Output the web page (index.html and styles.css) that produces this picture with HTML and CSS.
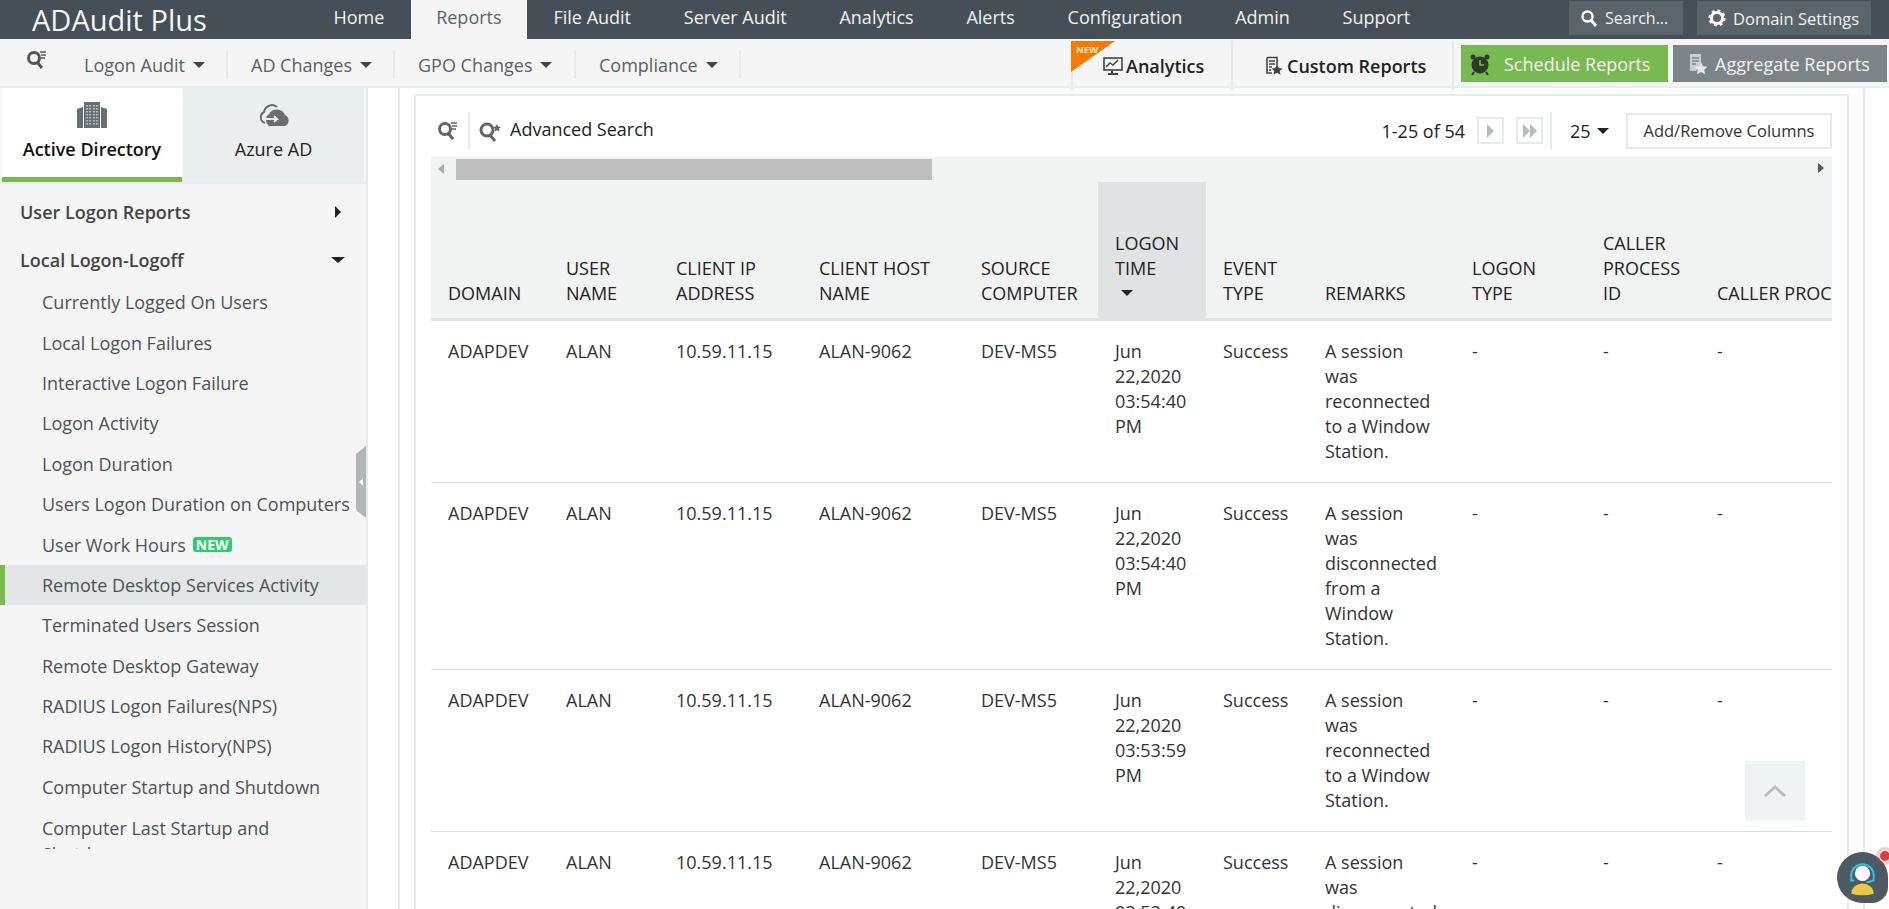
FILE: index.html
```html
<!DOCTYPE html>
<html lang="en">
<head>
<meta charset="utf-8">
<title>ADAudit Plus</title>
<link rel="stylesheet" href="styles.css">
</head>
<body>
<header class="topbar">
  <div class="logo">ADAudit Plus</div>
  <nav class="topnav">
    <a>Home</a><a class="active">Reports</a><a>File Audit</a><a>Server Audit</a><a>Analytics</a><a>Alerts</a><a>Configuration</a><a>Admin</a><a>Support</a>
  </nav>
  <div class="top-actions">
    <div class="top-btn top-search">
      <svg class="ic18" viewBox="0 0 18 18"><circle cx="7.5" cy="7.5" r="5" fill="none" stroke="#fff" stroke-width="2.4"/><path d="M11 11l5 6" stroke="#fff" stroke-width="3"/></svg>
      <span>Search...</span>
    </div>
    <div class="top-btn top-domain">
      <svg class="ic18" viewBox="0 0 18 18"><circle cx="9" cy="9" r="5.6" fill="none" stroke="#fff" stroke-width="3"/><circle cx="9" cy="9" r="7.6" fill="none" stroke="#fff" stroke-width="2" stroke-dasharray="3 3"/></svg>
      <span>Domain Settings</span>
    </div>
  </div>
</header>

<div class="subbar">
  <div class="subicon">
    <svg class="ic22" viewBox="0 0 22 22"><circle cx="8" cy="9" r="5.5" fill="none" stroke="#555" stroke-width="3"/><path d="M11 13l5 6" stroke="#555" stroke-width="3"/><path d="M14 3h6M15 6h5M15 9h4" stroke="#555" stroke-width="1.4"/></svg>
  </div>
  <div class="submenu"><a>Logon Audit<i class="caret"></i></a><a>AD Changes<i class="caret"></i></a><a>GPO Changes<i class="caret"></i></a><a>Compliance<i class="caret"></i></a></div>
  <div class="subright">
    <div class="subtab tab-analytics">
      <span class="ribbon"></span><span class="ribbon-text">NEW</span>
      <svg class="ic20" viewBox="0 0 20 20"><rect x="1" y="2" width="18" height="12" fill="none" stroke="#444" stroke-width="1.6"/><path d="M3 11l4-4 3 2 5-5" fill="none" stroke="#444" stroke-width="1.4"/><path d="M9 14v3M5 18h10" stroke="#444" stroke-width="2"/></svg>
      <span>Analytics</span>
    </div>
    <div class="subtab tab-custom">
      <svg class="ic20" viewBox="0 0 20 20"><path d="M3 1.500h10v8M8 17H3V1.500" fill="none" stroke="#444" stroke-width="1.600"/><path d="M5 5h6M5 8h6M5 11h3M5 14h2" stroke="#444" stroke-width="1.400"/><path d="M13 8.500l1.700 3.500 3.800.4-2.800 2.600.8 3.700-3.500-2-3.500 2 .8-3.700-2.800-2.600 3.800-.4z" fill="#444"/></svg>
      <span>Custom Reports</span>
    </div>
    <div class="cta cta-green">
      <svg class="ic24" viewBox="0 0 24 24"><circle cx="12" cy="13" r="8.500" fill="#2c3a2a"/><circle cx="5" cy="5" r="2.500" fill="#2c3a2a"/><circle cx="19" cy="5" r="2.500" fill="#2c3a2a"/><path d="M12 8v5h4" stroke="#79b951" stroke-width="1.600" fill="none"/><path d="M6 20l-2 3M18 20l2 3" stroke="#2c3a2a" stroke-width="2"/></svg>
      <span>Schedule Reports</span>
    </div>
    <div class="cta cta-grey">
      <svg class="ic24" viewBox="0 0 24 24"><path d="M4 2h11v9l-5 8H4z" fill="#c9cdcf"/><path d="M6 6h7M6 9h7M6 12h4" stroke="#7d8488" stroke-width="1.400"/><path d="M15 10l2 4.200 4.500.5-3.300 3.100.9 4.500-4.100-2.300-4.100 2.300.9-4.500-3.300-3.100 4.500-.5z" fill="#e4e6e7"/></svg>
      <span>Aggregate Reports</span>
    </div>
  </div>
</div>

<div class="content">
  <aside class="sidebar">
    <div class="sidetabs">
      <div class="sidetab current">
        <svg class="tabicon" viewBox="0 0 32 28"><path d="M1 27V8l6-2v21zM25 27V6l6 2v19z" fill="#686e72"/><rect x="8" y="1" width="16" height="26" fill="#686e72"/><path d="M11 4v21M14 4v21M18 4v21M21 4v21" stroke="#d4d6d7" stroke-width="1.500" stroke-dasharray="1.500 1.500"/></svg>
        <span>Active Directory</span>
      </div>
      <div class="sidetab">
        <svg class="tabicon" viewBox="0 0 36 28"><path d="M9 22a6 6 0 0 1-1-11 8 8 0 0 1 13-5" fill="none" stroke="#686e72" stroke-width="2"/><path d="M12 24a7 7 0 0 1 1-11 9 9 0 0 1 16 1 6 6 0 0 1 0 11H13z" fill="#686e72"/><path d="M6 18h15l-3-3M21 18l-3 3" fill="none" stroke="#ebeeef" stroke-width="1.800"/></svg>
        <span>Azure AD</span>
      </div>
    </div>
    <div class="sidelist">
      <div class="group closed">User Logon Reports</div>
      <div class="group open">Local Logon-Logoff</div>
      <a>Currently Logged On Users</a>
      <a>Local Logon Failures</a>
      <a>Interactive Logon Failure</a>
      <a>Logon Activity</a>
      <a>Logon Duration</a>
      <a>Users Logon Duration on Computers</a>
      <a>User Work Hours <b class="newtag">NEW</b></a>
      <a class="selected">Remote Desktop Services Activity</a>
      <a>Terminated Users Session</a>
      <a>Remote Desktop Gateway</a>
      <a>RADIUS Logon Failures(NPS)</a>
      <a>RADIUS Logon History(NPS)</a>
      <a>Computer Startup and Shutdown</a>
      <a class="wrap">Computer Last Startup and Shutdown</a>
    </div>
    <div class="collapse"><span></span></div>
  </aside>

  <main class="main">
    <section class="card">
      <div class="toolbar">
        <div class="tool-left">
          <span class="tool-ic"><svg class="ic22" viewBox="0 0 22 22"><circle cx="8" cy="10" r="5.500" fill="none" stroke="#666" stroke-width="3"/><path d="M11 14l5 6" stroke="#666" stroke-width="3"/><path d="M14 4h6M15 7h5M15 10h4" stroke="#666" stroke-width="1.400"/></svg></span>
          <svg class="ic24b" viewBox="0 0 24 22"><circle cx="9" cy="10" r="6" fill="none" stroke="#666" stroke-width="3"/><path d="M12 15l5 6" stroke="#666" stroke-width="3"/><path d="M19 4l1.200 2.600 2.800.3-2.100 1.900.6 2.800-2.500-1.400-2.500 1.400.6-2.800-2.100-1.900 2.800-.3z" fill="#666"/></svg>
          <span class="adv">Advanced Search</span>
        </div>
        <div class="tool-right">
          <span class="range">1-25 of 54</span>
          <span class="pg"><i class="tri"></i></span>
          <span class="pg"><i class="tri"></i><i class="tri"></i></span>
          <span class="perpage">25<i class="caret dark"></i></span>
          <span class="addcol">Add/Remove Columns</span>
        </div>
      </div>

      <div class="tablewrap">
        <div class="hscroll">
          <span class="arrow-left"></span>
          <span class="thumb"></span>
          <span class="arrow-right"></span>
        </div>
        <table class="grid">
          <colgroup>
            <col class="c1"><col class="c2"><col class="c3"><col class="c4"><col class="c5"><col class="c6"><col class="c7"><col class="c8"><col class="c9"><col class="c10"><col class="c11">
          </colgroup>
          <thead>
            <tr>
              <th>DOMAIN</th><th>USER<br>NAME</th><th>CLIENT IP<br>ADDRESS</th><th>CLIENT HOST<br>NAME</th><th>SOURCE<br>COMPUTER</th>
              <th class="sorted">LOGON<br>TIME<i class="caret dark block"></i></th>
              <th>EVENT<br>TYPE</th><th>REMARKS</th><th>LOGON<br>TYPE</th><th>CALLER<br>PROCESS<br>ID</th><th class="nowrap">CALLER PROCESS NAME</th>
            </tr>
          </thead>
          <tbody>
            <tr><td>ADAPDEV</td><td>ALAN</td><td>10.59.11.15</td><td>ALAN-9062</td><td>DEV-MS5</td><td>Jun 22,2020 03:54:40 PM</td><td>Success</td><td>A session was reconnected to a Window Station.</td><td>-</td><td>-</td><td>-</td></tr>
            <tr><td>ADAPDEV</td><td>ALAN</td><td>10.59.11.15</td><td>ALAN-9062</td><td>DEV-MS5</td><td>Jun 22,2020 03:54:40 PM</td><td>Success</td><td>A session was disconnected from a Window Station.</td><td>-</td><td>-</td><td>-</td></tr>
            <tr><td>ADAPDEV</td><td>ALAN</td><td>10.59.11.15</td><td>ALAN-9062</td><td>DEV-MS5</td><td>Jun 22,2020 03:53:59 PM</td><td>Success</td><td>A session was reconnected to a Window Station.</td><td>-</td><td>-</td><td>-</td></tr>
            <tr><td>ADAPDEV</td><td>ALAN</td><td>10.59.11.15</td><td>ALAN-9062</td><td>DEV-MS5</td><td>Jun 22,2020 03:53:40 PM</td><td>Success</td><td>A session was disconnected from a Window Station.</td><td>-</td><td>-</td><td>-</td></tr>
          </tbody>
        </table>
      </div>
    </section>
  </main>
</div>

<div class="totop"><svg viewBox="0 0 24 14" class="chev"><path d="M2 12l10-9 10 9" fill="none" stroke="#b9bcbd" stroke-width="3"/></svg></div>
<div class="chat">
  <svg viewBox="0 0 50 50" class="chat-ic"><circle cx="25" cy="21" r="7.500" fill="#fff"/><path d="M14 23a11 11 0 0 1 22 0" fill="none" stroke="#29c4dd" stroke-width="2"/><path d="M14 22v6h3M36 22v6l-7 2" fill="none" stroke="#29c4dd" stroke-width="2"/><path d="M14 41a11 10 0 0 1 22 0q-11 3-22 0z" fill="#e9c93f"/></svg>
  <span class="chat-dot"></span>
</div>
</body>
</html>
```

FILE: styles.css
```css
* { box-sizing: border-box; }
html, body { margin: 0; height: 100%; overflow: hidden; }
body {
  width: 1889px; height: 909px; display: flex; flex-direction: column; position: relative;
  font-family: "Open Sans", "Noto Sans", sans-serif; font-size: 18px; color: #333; background: #fff;
}
svg { display: block; flex: none; }
.ic18 { width: 18px; height: 20px; }
.ic20 { width: 20px; height: 20px; }
.ic22 { width: 22px; height: 22px; }
.ic24 { width: 24px; height: 24px; }
.ic24b { width: 24px; height: 22px; }

.topbar { height: 39px; flex: none; background: #444f57; display: flex; color: #fff; }
.logo { width: 307px; padding-left: 32px; font-size: 29px; line-height: 39px; color: #f4f5f5; white-space: nowrap; }
.topnav { display: flex; }
.topnav a { padding: 0 26.400px; line-height: 35px; font-size: 18px; color: #f2f3f3; white-space: nowrap; }
.topnav a.active { background: #f5f5f5; color: #5b646a; padding: 0 25.500px 0 25.500px; }
.top-actions { margin-left: auto; display: flex; gap: 14px; padding: 1px 18px 4px 0; }
.top-btn { background: #5a646b; display: flex; align-items: center; padding: 0 0 0 11px; gap: 7px; font-size: 16px; white-space: nowrap; color: #f2f3f3; }
.top-search { width: 114px; }
.top-domain { width: 174px; font-size: 16.500px; }

.subbar { height: 49px; flex: none; background: #f5f5f5; border-bottom: 2px solid #e9ecec; display: flex; position: relative; }
.subicon { width: 72px; padding: 10px 0 0 26px; }
.submenu { display: flex; padding-top: 12px; }
.submenu a { height: 28px; padding: 0 0 0 12px; border-right: 2px solid #e6eaea; display: flex; align-items: center; gap: 8px; font-size: 18px; color: #5a6065; white-space: nowrap; }
.submenu a + a { padding-left: 23px; }
.submenu a:nth-child(1) { width: 156px; }
.submenu a:nth-child(2) { width: 167px; }
.submenu a:nth-child(3) { width: 181px; }
.submenu a:nth-child(4) { width: 165px; }
.caret { display: inline-block; width: 0; height: 0; border: 6px solid transparent; border-top: 6px solid #444; border-bottom: 0; }
.caret.dark { border-top-color: #222; }
.caret.block { display: block; margin: 9px 0 10px 6px; }
.subright { margin-left: auto; display: flex; padding: 2px 2px 0 0; }
.subtab { height: 50px; margin-bottom: -3px; border-left: 2px solid #e6eaea; display: flex; align-items: center; gap: 3px; font-size: 18px; font-weight: 600; color: #222; position: relative; white-space: nowrap; }
.tab-analytics { width: 160px; padding-left: 30px; }
.tab-custom { padding-left: 31px; border-right: 2px solid #e6eaea; width: 223px; }
.ribbon { position: absolute; left: -2px; top: 0; width: 0; height: 0; border-top: 31px solid #f47a00; border-right: 44px solid transparent; }
.ribbon-text { position: absolute; left: 3px; top: 4px; font-size: 9.500px; line-height: 10px; font-weight: 700; color: #ffe3c4; }
.cta { height: 37px; margin: 4px 0 0; display: flex; align-items: center; font-size: 18px; white-space: nowrap; color: #f4f6f2; }
.cta-green { width: 207px; margin-left: 7px; background: #79b951; padding-left: 7px; gap: 12px; }
.cta-grey { width: 214px; margin-left: 5px; background: #7d8488; padding-left: 13px; gap: 5px; }

.content { flex: 1; min-height: 0; display: flex; }
.sidebar { width: 368px; flex: none; background: #f5f5f5; border-right: 2px solid #e6eaea; position: relative; overflow: hidden; }
.sidetabs { display: flex; height: 96px; border-bottom: 2px solid #e9ecec; padding-left: 2px; }
.sidetab { width: 181px; display: flex; flex-direction: column; align-items: center; padding-top: 13px; background: #ebeeef; font-size: 18px; color: #222; }
.sidetab.current { width: 180px; margin-right: 1px; background: #fff; border-bottom: 5px solid #79b951; font-weight: 600; color: #111; }
.tabicon { height: 28px; width: 36px; margin-bottom: 8px; }
.sidelist { height: 665px; overflow: hidden; padding-top: 4px; }
.group { height: 48px; padding: 0 20px; display: flex; align-items: center; justify-content: space-between; font-size: 18px; font-weight: 600; color: #444; }
.group.closed::after { content: ""; border-left: 6px solid #222; border-top: 6px solid transparent; border-bottom: 6px solid transparent; margin-right: 5px; }
.group.open { margin-bottom: -2px; }
.group.open::after { content: ""; border-top: 6px solid #222; border-left: 7px solid transparent; border-right: 7px solid transparent; margin-right: 1px; }
.sidelist a { display: flex; align-items: center; height: 40.400px; padding-left: 42px; font-size: 18px; color: #4d5257; white-space: nowrap; }
.sidelist a.selected { background: #e3e5e6; border-left: 5px solid #79b951; padding-left: 37px; }
.sidelist a.wrap { display: block; white-space: normal; width: 300px; line-height: 26px; height: 60px; padding-top: 8px; }
.newtag { margin-left: 7px; background: #2ecc71; color: #fff; font-size: 14px; font-weight: 700; line-height: 15px; padding: 0 3px; border-radius: 3px; }
.collapse { position: absolute; right: 0; top: 358px; width: 10px; height: 72px; background: #b1b5b6; clip-path: polygon(0 8px, 100% 0, 100% 100%, 0 calc(100% - 8px)); display: flex; align-items: center; justify-content: center; }
.collapse span { border-right: 4px solid #fff; border-top: 4px solid transparent; border-bottom: 4px solid transparent; }

.main { width: 1467px; flex: none; padding: 6px 14px 0 14px; margin-left: 30px; border-left: 2px solid #e6eaea; border-right: 2px solid #e6eaea; overflow: hidden; }
.card { height: 1000px; border: 2px solid #e6eaea; padding: 0 15px; }
.toolbar { height: 61px; display: flex; justify-content: space-between; padding-top: 16px; }
.tool-left { display: flex; align-items: center; height: 37px; }
.tool-ic { width: 39px; height: 37px; padding: 7px 0 0 6px; border-right: 2px solid #e6eaea; margin-right: 8px; }
.adv { margin-left: 8px; font-size: 18px; color: #222; line-height: 35px; height: 37px; }
.tool-right { display: flex; align-items: center; height: 37px; }
.range { font-size: 18px; color: #222; margin-right: 12px; }
.pg { width: 27px; height: 27px; border: 2px solid #e6eaea; display: flex; align-items: center; justify-content: center; margin-right: 12px; }
.pg + .pg { margin-right: 7px; }
.tri { border-left: 7px solid #b9bcbd; border-top: 7px solid transparent; border-bottom: 7px solid transparent; }
.perpage { height: 37px; border-left: 2px solid #e6eaea; padding-left: 18px; width: 76px; display: flex; align-items: center; gap: 6px; font-size: 18px; color: #222; }
.addcol { width: 206px; height: 36px; border: 2px solid #e6eaea; display: flex; align-items: center; justify-content: center; font-size: 16.500px; color: #333; white-space: nowrap; }

.tablewrap { width: 1401px; overflow: hidden; }
.hscroll { height: 23px; background: #f1f2f2; padding-top: 2px; display: flex; position: relative; }
.arrow-left { width: 25px; display: flex; }
.arrow-left::before { content: ""; margin: 5px 0 0 7px; height: 0; border-right: 6px solid #aaa; border-top: 5px solid transparent; border-bottom: 5px solid transparent; }
.thumb { width: 476px; background: #bdbdbd; }
.arrow-right { position: absolute; right: 8px; top: 6px; border-left: 6px solid #555; border-top: 5px solid transparent; border-bottom: 5px solid transparent; }

.grid { border-collapse: collapse; table-layout: fixed; width: 1480px; font-size: 18px; line-height: 25px; }
.c1 { width: 118px; } .c2 { width: 110px; } .c3 { width: 143px; } .c4 { width: 162px; } .c5 { width: 134px; }
.c6 { width: 108px; } .c7 { width: 102px; } .c8 { width: 147px; } .c9 { width: 131px; } .c10 { width: 114px; } .c11 { width: 211px; }
.grid th { height: 138px; background: #f1f2f2; border-top: 2px solid #f1f2f2; border-bottom: 3px solid #dfe3e3; vertical-align: bottom; text-align: left; font-weight: 400; color: #222; padding: 0 0 12px 17px; }
.grid th.sorted { background: #dfe3e3; }
.grid th.nowrap { white-space: nowrap; overflow: hidden; }
.grid td { vertical-align: top; padding: 18px 15px 18px 17px; border-bottom: 1px solid #dcdfdf; color: #333; }

.totop { position: absolute; left: 1745px; top: 761px; width: 60px; height: 60px; background: #f0f3f3; display: flex; align-items: center; justify-content: center; }
.chev { width: 24px; height: 14px; }
.chat { position: absolute; left: 1837px; top: 852px; width: 51px; height: 51px; background: #4e5a63; border-radius: 50% 50% 16px 50%; }
.chat-ic { width: 51px; height: 51px; }
.chat-dot { position: absolute; right: -2px; top: -1px; width: 10px; height: 10px; border-radius: 50%; background: #e53935; box-shadow: 0 0 0 1px #fff, 0 0 0 4px rgba(229,57,53,.25); }
```
